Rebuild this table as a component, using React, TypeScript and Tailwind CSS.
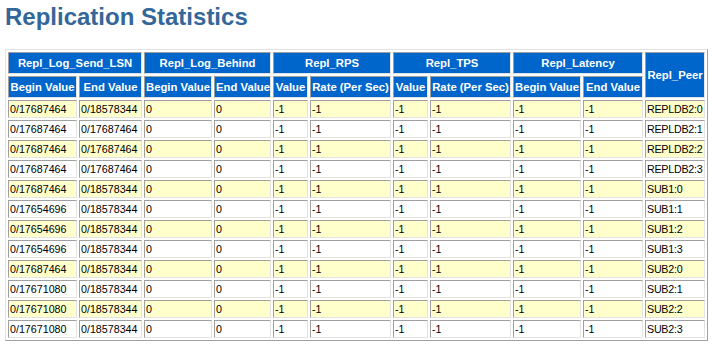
const ROWS: [string, string, string][] = [
  ['0/17687464', '0/18578344', 'REPLDB2:0'],
  ['0/17687464', '0/17687464', 'REPLDB2:1'],
  ['0/17687464', '0/17687464', 'REPLDB2:2'],
  ['0/17687464', '0/17687464', 'REPLDB2:3'],
  ['0/17687464', '0/18578344', 'SUB1:0'],
  ['0/17654696', '0/18578344', 'SUB1:1'],
  ['0/17654696', '0/18578344', 'SUB1:2'],
  ['0/17654696', '0/18578344', 'SUB1:3'],
  ['0/17687464', '0/18578344', 'SUB2:0'],
  ['0/17671080', '0/18578344', 'SUB2:1'],
  ['0/17671080', '0/18578344', 'SUB2:2'],
  ['0/17671080', '0/18578344', 'SUB2:3'],
]

const COL_WIDTHS = [69, 63, 68, 57, 35, 81, 35, 81, 68, 60, 60]

const cell =
  'border border-t-[#a0a0a0] border-l-[#a0a0a0] border-b-[#e3e3e3] border-r-[#e3e3e3] px-[1px] whitespace-nowrap overflow-hidden'
const head = `${cell} bg-[#0066cc] text-white font-bold text-center align-middle text-[11.3px]`

export default function App() {
  return (
    <div className="min-h-screen bg-white px-[5px] pt-[3px] font-['Liberation_Sans',Arial,sans-serif]">
      <h1 className="text-[24px] leading-[28px] font-bold text-[#336699]">Replication Statistics</h1>

      <table className="mt-[18px] w-[703px] table-fixed border-separate border-spacing-[2px] border border-t-[#e3e3e3] border-l-[#e3e3e3] border-b-[#a0a0a0] border-r-[#a0a0a0] text-[10.7px] leading-[12px]">
        <colgroup>
          {COL_WIDTHS.map((w, i) => (
            <col key={i} style={{ width: w }} />
          ))}
        </colgroup>
        <thead>
          <tr className="h-[22px]">
            <th colSpan={2} className={head}>Repl_Log_Send_LSN</th>
            <th colSpan={2} className={head}>Repl_Log_Behind</th>
            <th colSpan={2} className={head}>Repl_RPS</th>
            <th colSpan={2} className={head}>Repl_TPS</th>
            <th colSpan={2} className={head}>Repl_Latency</th>
            <th rowSpan={2} className={head}>Repl_Peer</th>
          </tr>
          <tr className="h-[22px]">
            <th className={head}>Begin Value</th>
            <th className={head}>End Value</th>
            <th className={head}>Begin Value</th>
            <th className={head}>End Value</th>
            <th className={head}>Value</th>
            <th className={head}>Rate (Per Sec)</th>
            <th className={head}>Value</th>
            <th className={head}>Rate (Per Sec)</th>
            <th className={head}>Begin Value</th>
            <th className={head}>End Value</th>
          </tr>
        </thead>
        <tbody>
          {ROWS.map(([begin, end, peer], i) => {
            const bg = i % 2 === 0 ? 'bg-[#ffffcc]' : 'bg-white'
            const values = [begin, end, '0', '0', '-1', '-1', '-1', '-1', '-1', '-1']
            return (
              <tr key={i} className="h-[18px]">
                {values.map((v, j) => (
                  <td key={j} className={`${cell} ${bg} text-black text-left align-middle`}>
                    {v}
                  </td>
                ))}
                <td className={`${cell} ${bg} text-black text-left align-middle tracking-[-0.25px]`}>{peer}</td>
              </tr>
            )
          })}
        </tbody>
      </table>
    </div>
  )
}
